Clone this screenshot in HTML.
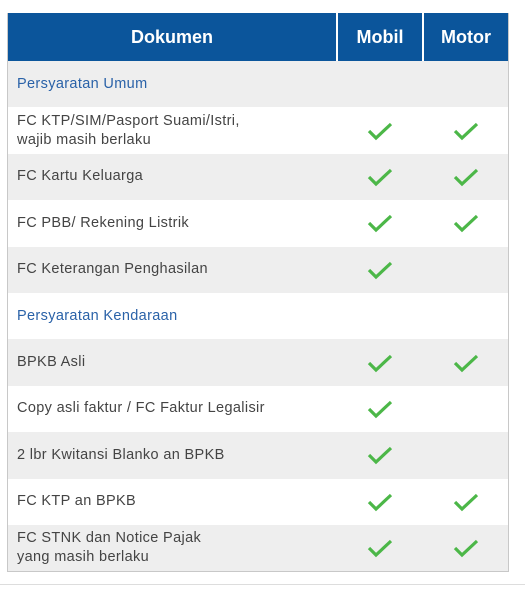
<!DOCTYPE html>
<html><head><style>
body{margin:0;background:#fff;width:525px;height:589px;position:relative;overflow:hidden;font-family:"Liberation Sans",Arial,sans-serif}
.t{position:absolute;left:7px;top:13px;width:500px;border:1px solid #c8c8c8;border-top:none}
.h{display:flex;height:48px;background:#0b559b;color:#fff;font-weight:bold;font-size:18px}
.h div{display:flex;align-items:center;justify-content:center}
.r{display:flex;height:46.4px;align-items:center;font-size:14.5px;letter-spacing:0.35px;color:#444;line-height:19px}
.g{background:#eeeeee}.w{background:#fff}
.c1{width:328px;padding-left:9px;box-sizing:border-box;white-space:nowrap}
.c2{width:86px;text-align:center;padding-left:2px;box-sizing:border-box}.c3{width:86px;text-align:center;padding-left:2px;box-sizing:border-box}
.s{color:#2a62a8}
svg{display:inline-block;vertical-align:middle}
</style></head><body>
<div class="t">
<div class="h"><div style="width:328px">Dokumen</div><div style="width:86px;border-left:2px solid #fff;box-sizing:border-box">Mobil</div><div style="width:86px;border-left:2px solid #fff;box-sizing:border-box">Motor</div></div>
<div class="r g"><div class="c1 s">Persyaratan Umum</div></div>
<div class="r w"><div class="c1">FC KTP/SIM/Pasport Suami/Istri,<br>wajib masih berlaku</div><div class="c2">✓</div><div class="c3">✓</div></div>
<div class="r g"><div class="c1">FC Kartu Keluarga</div><div class="c2">✓</div><div class="c3">✓</div></div>
<div class="r w"><div class="c1">FC PBB/ Rekening Listrik</div><div class="c2">✓</div><div class="c3">✓</div></div>
<div class="r g"><div class="c1">FC Keterangan Penghasilan</div><div class="c2">✓</div><div class="c3"></div></div>
<div class="r w"><div class="c1 s">Persyaratan Kendaraan</div></div>
<div class="r g"><div class="c1">BPKB Asli</div><div class="c2">✓</div><div class="c3">✓</div></div>
<div class="r w"><div class="c1">Copy asli faktur / FC Faktur Legalisir</div><div class="c2">✓</div><div class="c3"></div></div>
<div class="r g"><div class="c1">2 lbr Kwitansi Blanko an BPKB</div><div class="c2">✓</div><div class="c3"></div></div>
<div class="r w"><div class="c1">FC KTP an BPKB</div><div class="c2">✓</div><div class="c3">✓</div></div>
<div class="r g"><div class="c1">FC STNK dan Notice Pajak<br>yang masih berlaku</div><div class="c2">✓</div><div class="c3">✓</div></div>
</div>
<div style="position:absolute;left:0;right:0;top:584px;height:1px;background:#ddd"></div>
<script>
document.querySelectorAll('.c2,.c3').forEach(e=>{if(e.textContent=='✓')e.innerHTML='<svg width="26" height="20" viewBox="0 0 26 20"><path d="M2 10 L9 17 L24 3" fill="none" stroke="#4cb748" stroke-width="3.2"/></svg>';});
</script>
</body></html>
